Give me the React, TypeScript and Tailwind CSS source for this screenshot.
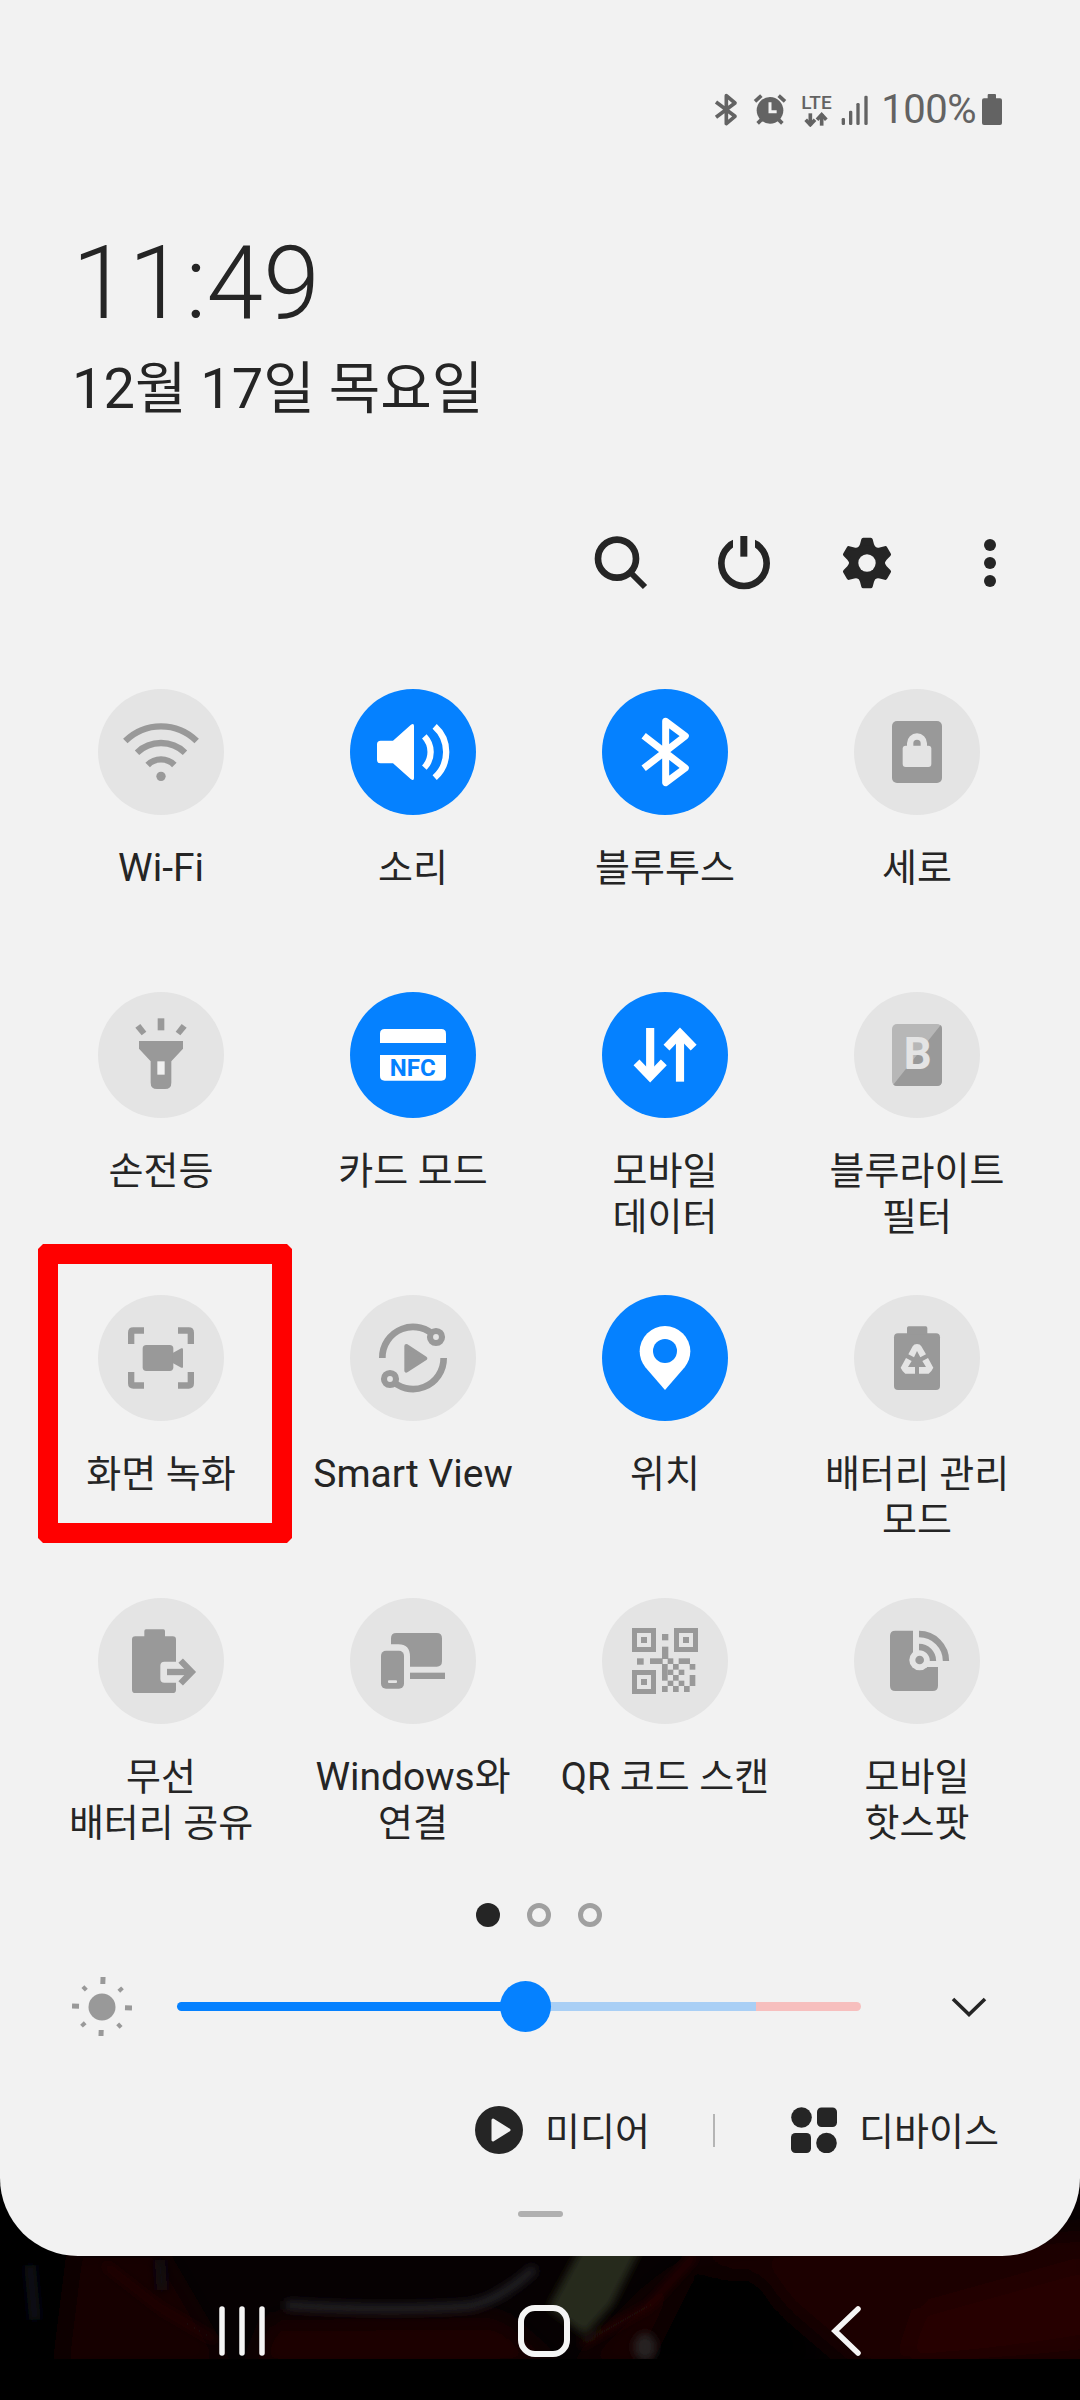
import React from 'react';

const OFF = '#999999';
const OFF_BG = '#e4e4e4';
const PANEL = '#f2f2f2';
const BLUE = '#0581ff';
const INK = '#252525';

interface TileData {
  id: string;
  lines: string[];
  active?: boolean;
  highlighted?: boolean;
  /** Latin labels are set one step larger than the Korean ones */
  latin?: boolean;
  icon: React.ReactNode;
}

/* Tile glyphs, all drawn on a 378 x 378 grid */

const WifiGlyph = (
  <g stroke={OFF} strokeWidth={19} fill="none">
    <path d="M82 156 A152 152 0 0 1 296 156" />
    <path d="M117 191 A104 104 0 0 1 261 191" />
    <path d="M149 228 A56 56 0 0 1 229 228" />
    <circle cx={189} cy={262} r={14} fill={OFF} stroke="none" />
  </g>
);

const SoundGlyph = (
  <g stroke="#fff" strokeWidth={19} fill="none">
    <path
      d="M92 155 H129 L182 108 Q192 101 192 111 V267 Q192 277 182 270 L129 223 H92 Q81 223 81 212 V166 Q81 155 92 155Z"
      fill="#fff"
      stroke="none"
    />
    <path d="M223 142 A68 68 0 0 1 223 236" />
    <path d="M254 112 A103 103 0 0 1 254 266" />
  </g>
);

const BluetoothGlyph = (
  <path
    d="M125 140 L250 237 L191 281 V97 L250 141 L125 238"
    stroke="#fff"
    strokeWidth={21}
    strokeLinejoin="round"
    fill="none"
  />
);

const PortraitLockGlyph = (
  <g>
    <rect x={114} y={96} width={150} height={186} rx={15} fill={OFF} />
    <rect x={146} y={170} width={86} height={64} rx={9} fill={OFF_BG} />
    <path d="M168.500 174 V163 a20.500 20.500 0 0 1 41 0 V174" stroke={OFF_BG} strokeWidth={19} fill="none" />
  </g>
);

const FlashlightGlyph = (
  <g fill={OFF}>
    <rect x={179} y={79} width={20} height={36} />
    <path d="M112 107 L127 96 L145 119 L131 130Z" />
    <path d="M266 107 L251 96 L233 119 L247 130Z" />
    <path d="M123 147 H255 V170 L220 208 V272 Q220 291 201 291 H177 Q158 291 158 272 V208 L123 170Z" />
    <rect x={178} y={208} width={22} height={40} fill="#f0f0f0" />
  </g>
);

const CardGlyph = (
  <g fill="#fff">
    <path d="M90 153 V125 Q90 111 104 111 H274 Q288 111 288 125 V153Z" />
    <path d="M90 189 H288 V252 Q288 266 274 266 H104 Q90 266 90 252Z" />
    <text
      x={188}
      y={252}
      fontSize={73}
      fontWeight={700}
      fontFamily="Roboto, sans-serif"
      textAnchor="middle"
      textLength={138}
      lengthAdjust="spacingAndGlyphs"
      fill={BLUE}
    >
      NFC
    </text>
  </g>
);

const MobileDataGlyph = (
  <g stroke="#fff" strokeWidth={24.500} fill="none">
    <path d="M144.500 108 V255" />
    <path d="M103.500 211 L144.500 254 L185.500 211" />
    <path d="M234 269 V124" />
    <path d="M193.500 167 L234 124 L275 167" />
  </g>
);

const BlueLightGlyph = (
  <g>
    <rect x={114} y={96} width={150} height={186} rx={15} fill="#b7b7b7" />
    <path d="M260 99 Q264 103 264 111 V267 Q264 282 249 282 H129 Q122 282 118 278Z" fill={OFF} />
    <text
      x={191}
      y={231}
      fontSize={131}
      fontWeight={700}
      fontFamily="Roboto, sans-serif"
      textAnchor="middle"
      fill={OFF_BG}
    >
      B
    </text>
  </g>
);

const RecordGlyph = (
  <g fill={OFF}>
    <g stroke={OFF} strokeWidth={19} fill="none">
      <path d="M138 106.500 H106 Q99.500 106.500 99.500 113 V147" />
      <path d="M240 106.500 H272 Q278.500 106.500 278.500 113 V147" />
      <path d="M138 271.500 H106 Q99.500 271.500 99.500 265 V231" />
      <path d="M240 271.500 H272 Q278.500 271.500 278.500 265 V231" />
    </g>
    <rect x={134} y={150} width={92} height={78} rx={11} />
    <path d="M224 174 L250 160 Q255 158 255 163 V215 Q255 220 250 218 L224 204Z" />
  </g>
);

const SmartViewGlyph = (
  <g stroke={OFF} strokeWidth={20} fill="none">
    <path d="M97 189 A92 92 0 0 1 258 127" />
    <path d="M281 189 A92 92 0 0 1 120 251" />
    <circle cx={258} cy={126} r={18} fill={OFF_BG} strokeWidth={18.500} />
    <circle cx={120} cy={252} r={18} fill={OFF_BG} strokeWidth={18.500} />
    <path d="M169 153 L226 190 L169 227Z" fill={OFF} strokeWidth={12} strokeLinejoin="round" />
  </g>
);

const LocationGlyph = (
  <g>
    <path d="M189 285 L130 217 C119 203 113 187 113 169 A76 76 0 0 1 265 169 C265 187 259 203 248 217Z" fill="#fff" />
    <circle cx={189} cy={168} r={36} fill={BLUE} />
  </g>
);

const PowerModeGlyph = (
  <g>
    <rect x={120} y={115} width={138} height={170} rx={12} fill={OFF} />
    <path d="M159 118 V99 Q159 94 164 94 H215 Q220 94 220 99 V118Z" fill={OFF} />
    <g fill={OFF_BG}>
      <path d="M163 178 L176 154 Q180 147 189 147 Q198 147 202 154 L216 178 L199 187 L189 168 L180 187Z" />
      <path d="M156 189 L173 198 L162 216 H183 V236 H154 Q146 231 140 218Z" />
      <path d="M222 189 L205 198 L216 216 H195 V236 H224 Q232 231 238 218Z" />
    </g>
  </g>
);

const PowerShareGlyph = (
  <g>
    <path
      d="M139 115 V99 Q139 94 144 94 H196 Q201 94 201 99 V115 H224 Q234 115 234 125 V191 H199 Q187 191 187 203 V242 Q187 254 199 254 H234 V275 Q234 285 224 285 H112 Q102 285 102 275 V125 Q102 115 112 115Z"
      fill={OFF}
    />
    <path d="M207 222 H282" stroke={OFF} strokeWidth={19} />
    <path d="M248 188 L281 222 L248 256" stroke={OFF} strokeWidth={19} fill="none" />
  </g>
);

const WindowsLinkGlyph = (
  <g fill={OFF}>
    <path d="M139 105 H260 Q276 105 276 121 V190 Q276 206 260 206 H180 V176 Q180 139 145 139 H123 V121 Q123 105 139 105Z" />
    <rect x={180} y={224} width={105} height={19} />
    <rect x={93} y={158} width={69} height={114} rx={15} />
    <rect x={114} y={247} width={27} height={8} rx={3} fill={OFF_BG} />
  </g>
);

const QR_FINDERS = [
  [90, 90],
  [216, 90],
  [90, 216],
];

const QR_BLOCKS = [
  [180, 108, 19, 19],
  [105, 181, 20, 19],
  [180, 146, 19, 37],
  [144, 181, 38, 17],
  [180, 198, 17, 50],
  [197, 181, 17, 17],
  [230, 181, 34, 17],
  [213, 198, 17, 17],
  [263, 198, 17, 17],
  [197, 215, 17, 16],
  [230, 215, 17, 16],
  [213, 231, 17, 17],
  [263, 231, 17, 33],
  [197, 248, 17, 16],
  [230, 248, 17, 16],
  [180, 264, 17, 18],
  [213, 264, 17, 18],
  [246, 264, 17, 18],
];

const QrGlyph = (
  <g fill={OFF}>
    {QR_FINDERS.map(([x, y]) => (
      <g key={`${x}-${y}`}>
        <rect x={x + 7.5} y={y + 7.5} width={57} height={57} fill="none" stroke={OFF} strokeWidth={15} />
        <rect x={x + 27} y={y + 27} width={18} height={18} />
      </g>
    ))}
    {QR_BLOCKS.map(([x, y, w, h]) => (
      <rect key={`${x}-${y}`} x={x} y={y} width={w} height={h} />
    ))}
  </g>
);

const HotspotGlyph = (
  <g>
    <path d="M124 98 H177 V207 H252 V263 Q252 279 236 279 H124 Q108 279 108 263 V114 Q108 98 124 98Z" fill={OFF} />
    <circle cx={197} cy={186} r={31} fill={OFF_BG} />
    <circle cx={197} cy={186} r={13} fill={OFF} />
    <g stroke={OFF} strokeWidth={19} fill="none">
      <path d="M195 147 A42 42 0 0 1 237 189" />
      <path d="M195 108 A81 81 0 0 1 276 189" />
    </g>
  </g>
);

const tiles: TileData[] = [
  { id: 'wifi', lines: ['Wi-Fi'], latin: true, icon: WifiGlyph },
  { id: 'sound', lines: ['소리'], active: true, icon: SoundGlyph },
  { id: 'bluetooth', lines: ['블루투스'], active: true, icon: BluetoothGlyph },
  { id: 'portrait', lines: ['세로'], icon: PortraitLockGlyph },
  { id: 'flashlight', lines: ['손전등'], icon: FlashlightGlyph },
  { id: 'card', lines: ['카드 모드'], active: true, icon: CardGlyph },
  { id: 'data', lines: ['모바일', '데이터'], active: true, icon: MobileDataGlyph },
  { id: 'bluelight', lines: ['블루라이트', '필터'], icon: BlueLightGlyph },
  { id: 'record', lines: ['화면 녹화'], highlighted: true, icon: RecordGlyph },
  { id: 'smartview', lines: ['Smart View'], latin: true, icon: SmartViewGlyph },
  { id: 'location', lines: ['위치'], active: true, icon: LocationGlyph },
  { id: 'powermode', lines: ['배터리 관리', '모드'], icon: PowerModeGlyph },
  { id: 'powershare', lines: ['무선', '배터리 공유'], icon: PowerShareGlyph },
  { id: 'windows', lines: ['Windows와', '연결'], latin: true, icon: WindowsLinkGlyph },
  { id: 'qr', lines: ['QR 코드 스캔'], icon: QrGlyph },
  { id: 'hotspot', lines: ['모바일', '핫스팟'], icon: HotspotGlyph },
];

function Tile({ tile }: { tile: TileData }) {
  return (
    <div className="relative flex h-[303px] flex-col items-center">
      <div
        className={`h-[126px] w-[126px] rounded-full ${tile.active ? 'bg-[#0581ff]' : 'bg-[#e4e4e4]'}`}
      >
        <svg viewBox="0 0 378 378" className="h-full w-full">
          {tile.icon}
        </svg>
      </div>
      <div className="mt-[30px] text-center text-[38px] leading-[46px] whitespace-nowrap">
        {tile.lines.map((line, i) => (
          <div key={line} className={tile.latin && i === 0 ? 'text-[39px]' : ''}>
            {line}
          </div>
        ))}
      </div>
      {tile.highlighted && (
        <div className="absolute -top-[51px] left-[3px] h-[299px] w-[254px] border-[20px] border-[#ff0000] [clip-path:polygon(5px_0,249px_0,254px_5px,254px_294px,249px_299px,5px_299px,0_294px,0_5px)]" />
      )}
    </div>
  );
}

function StatusBar() {
  const c = '#636363';
  return (
    <div className="flex h-[34px] items-center justify-end pr-[78px] text-[#636363]">
      <svg viewBox="0 0 72 102" className="h-[34px] w-[24px]">
        <path d="M6 27 L63 70 L37 92 V8 L63 30 L6 73" stroke={c} strokeWidth={11} strokeLinejoin="round" fill="none" />
      </svg>
      <svg viewBox="0 0 102 102" className="ml-[15px] h-[34px] w-[34px]">
        <circle cx={51} cy={52} r={40} fill={c} />
        <g stroke={c} strokeWidth={11}>
          <path d="M6 25 L25 8" />
          <path d="M77 8 L96 25" />
          <path d="M14 91 L26 79" />
          <path d="M76 79 L88 91" />
        </g>
        <path d="M51 28 V56 H71" stroke={PANEL} strokeWidth={9} fill="none" />
      </svg>
      <svg viewBox="0 0 93 102" className="ml-[14px] h-[34px] w-[31px]">
        <text
          x={1}
          y={47}
          fontSize={56}
          fontWeight={500}
          fontFamily="Roboto, sans-serif"
          textLength={91}
          lengthAdjust="spacingAndGlyphs"
          fill={c}
        >
          LTE
        </text>
        <g stroke={c} strokeWidth={11} fill="none">
          <path d="M28 61 V97" />
          <path d="M14 80 L28 95 L42 80" />
          <path d="M62 98 V63" />
          <path d="M48 80 L62 65 L76 80" />
        </g>
      </svg>
      <svg viewBox="0 0 84 102" className="ml-[9px] h-[34px] w-[28px]" fill={c}>
        <rect x={2} y={75} width={10} height={21} rx={4} />
        <rect x={24} y={53} width={10} height={43} rx={4} />
        <rect x={46} y={30} width={10} height={66} rx={4} />
        <rect x={70} y={8} width={10} height={88} rx={4} />
      </svg>
      <span className="ml-[11px] w-[96px] text-right text-[40px] leading-[34px] tracking-[-0.5px]">100%</span>
      <svg viewBox="0 0 60 102" className="ml-[6px] h-[34px] w-[20px]" fill={c}>
        <rect x={17} y={3} width={25} height={20} rx={3} />
        <rect x={0} y={16} width={60} height={80} rx={6} />
      </svg>
    </div>
  );
}

function Toolbar() {
  return (
    <div className="flex h-[54px] items-center justify-end gap-[69px] pr-[63px]">
      <svg viewBox="0 0 162 162" className="h-[54px] w-[54px]" stroke={INK} strokeWidth={20} fill="none">
        <circle cx={69} cy={68} r={57} />
        <path d="M108 108 L153 153" strokeWidth={18} />
      </svg>
      <svg viewBox="0 0 162 162" className="h-[54px] w-[54px]">
        <circle cx={81} cy={82} r={68} stroke={INK} strokeWidth={20} fill="none" />
        <rect x={48} y={0} width={66} height={50} fill={PANEL} />
        <rect x={70} y={0} width={21} height={62} fill={INK} />
      </svg>
      <svg viewBox="-81 -81 162 162" className="h-[54px] w-[54px]">
        {[0, 60, 120, 180, 240, 300].map((deg) => (
          <path
            key={deg}
            transform={`rotate(${deg})`}
            d="M-30 -44 Q-23 -49 -21 -56 L-17 -71 Q-16 -76 -11 -76 H11 Q16 -76 17 -71 L21 -56 Q23 -49 30 -44 L0 0Z"
            fill={INK}
          />
        ))}
        <circle r={53} fill={INK} />
        <circle r={26} fill={PANEL} />
      </svg>
      <svg viewBox="0 0 162 162" className="h-[54px] w-[54px]" fill={INK}>
        <circle cx={81} cy={27} r={18} />
        <circle cx={81} cy={81} r={18} />
        <circle cx={81} cy={135} r={18} />
      </svg>
    </div>
  );
}

function BrightnessRow() {
  return (
    <div className="flex h-[60px] items-center pl-[72px]">
      <svg viewBox="-30 -30 60 60" className="h-[60px] w-[60px]" fill={OFF}>
        <circle cy={1} r={13.5} />
        <g transform="translate(0 1) rotate(2)">
          {[0, 90, 180, 270].map((deg) => (
            <rect key={deg} x={-2.5} y={-30} width={5} height={7} transform={`rotate(${deg})`} />
          ))}
          {[45, 135, 225, 315].map((deg) => (
            <rect key={deg} x={-2} y={-28} width={4} height={5} transform={`rotate(${deg})`} />
          ))}
        </g>
      </svg>
      <div className="relative ml-[45px] flex h-[9px] w-[684px] overflow-visible">
        <div className="w-[349px] rounded-l-full bg-[#0581ff]" />
        <div className="w-[230px] bg-[#a9cff5]" />
        <div className="flex-1 rounded-r-full bg-[#f7bfbe]" />
        <div className="absolute -top-[21px] left-[323px] h-[51px] w-[51px] rounded-full bg-[#0581ff]" />
      </div>
      <svg viewBox="0 0 36 22" className="mt-[2px] ml-[90px] h-[22px] w-[36px]">
        <path d="M2 3 L18 18.500 L34 3" stroke={INK} strokeWidth={3.6} fill="none" />
      </svg>
    </div>
  );
}

function FooterLinks() {
  return (
    <div className="flex h-[52px] items-center pl-[475px] text-[38px] leading-[52px] whitespace-nowrap">
      <svg viewBox="0 0 48 48" className="h-[48px] w-[48px]">
        <circle cx={24} cy={24} r={24} fill={INK} />
        <path d="M18 14 L34 24 L18 34Z" fill={PANEL} stroke={PANEL} strokeWidth={3} strokeLinejoin="round" />
      </svg>
      <span className="mt-[3px] ml-[22px] w-[104px]">미디어</span>
      <div className="ml-[64px] h-[33px] w-[2px] bg-[#b5b5b5]" />
      <svg viewBox="0 0 46 46" className="ml-[76px] h-[46px] w-[46px]" fill={INK}>
        <circle cx={10.5} cy={10.5} r={10.3} />
        <rect x={26} y={0.5} width={20} height={19.500} rx={4.5} />
        <rect x={0} y={26} width={20} height={20} rx={4.5} />
        <circle cx={35.5} cy={36} r={10.3} />
      </svg>
      <span className="mt-[3px] ml-[22px]">디바이스</span>
    </div>
  );
}

/** Dimmed, out-of-focus wallpaper strip behind the navigation keys */
function Wallpaper() {
  return (
    <svg viewBox="0 0 1080 219" className="absolute top-[2140px] left-0 h-[219px] w-[1080px] bg-[#060102]">
      <defs>
        <filter id="soft" x="-20%" y="-20%" width="140%" height="140%">
          <feGaussianBlur stdDeviation="12" />
        </filter>
        <filter id="fine" x="-20%" y="-20%" width="140%" height="140%">
          <feGaussianBlur stdDeviation="4" />
        </filter>
      </defs>
      <g filter="url(#soft)">
        <rect x={-20} y={0} width={90} height={240} fill="#020306" />
        <path d="M75 110 L160 110 L230 230 L60 230Z" fill="#150303" />
        <path d="M270 180 L500 178 L560 230 L250 230Z" fill="#1b0405" />
        <path d="M570 230 L650 150 L700 110 L730 230Z" fill="#120303" />
        <path d="M690 110 L1100 90 L1100 230 L860 230 L790 170Z" fill="#1f0302" />
        <path d="M690 130 L760 130 L830 230 L640 230Z" fill="#060101" />
        <path d="M920 170 L1100 120 L1100 200 L900 230Z" fill="#280502" />
      </g>
      <g filter="url(#fine)">
        <path d="M585 100 H645 L612 165 L585 195 L548 168Z" fill="#25291a" />
        <path d="M285 165 Q390 172 470 166 Q500 160 535 128" stroke="#242026" strokeWidth={9} fill="none" />
        <path d="M105 125 L160 168 L215 200" stroke="#260808" strokeWidth={5} fill="none" />
        <path d="M695 115 L650 165 L580 205" stroke="#2d0c09" strokeWidth={5} fill="none" />
        <path d="M30 125 L35 180" stroke="#070d14" strokeWidth={12} />
        <ellipse cx={645} cy={207} rx={11} ry={14} fill="#252022" />
        <path d="M160 120 L162 150" stroke="#101014" strokeWidth={10} />
      </g>
    </svg>
  );
}

function NavigationBar() {
  return (
    <div className="relative mt-[47px] flex h-[56px] items-center pl-[217px]">
      <svg viewBox="0 0 50 56" className="h-[56px] w-[50px]" stroke="#f5f5f5" strokeWidth={5.500} strokeLinecap="round">
        <path d="M5 6 V50" />
        <path d="M25 6 V50" />
        <path d="M45 6 V50" />
      </svg>
      <svg
        viewBox="0 0 56 56"
        className="ml-[249px] h-[56px] w-[56px]"
        stroke="#f5f5f5"
        strokeWidth={6}
        fill="none"
      >
        <rect x={5} y={5} width={46} height={46} rx={14} />
      </svg>
      <svg
        viewBox="0 0 34 56"
        className="ml-[257px] h-[56px] w-[34px]"
        stroke="#f5f5f5"
        strokeWidth={5.500}
        fill="none"
      >
        <path d="M29 6 L6 28 L29 50" strokeLinecap="round" />
      </svg>
    </div>
  );
}

export default function App() {
  return (
    <div className="relative h-[2400px] w-[1080px] overflow-hidden bg-black font-[Roboto,'Noto_Sans_CJK_KR',sans-serif] text-[#252525]">
      <Wallpaper />
      <div className="relative h-[2256px] rounded-b-[78px] bg-[#f2f2f2] pt-[93px]">
        <StatusBar />

        {/* Clock and date */}
        <div className="mt-[96px] pl-[72px]">
          <div className="text-[102px] leading-[120px] font-light">11:49</div>
          <div className="mt-[10px] text-[56px] leading-[72px]">12월 17일 목요일</div>
        </div>

        <div className="mt-[111px]">
          <Toolbar />
        </div>

        {/* Quick settings */}
        <div className="mt-[99px] grid grid-cols-4 pr-[37px] pl-[35px]">
          {tiles.map((tile) => (
            <Tile key={tile.id} tile={tile} />
          ))}
        </div>

        {/* Page indicator */}
        <div className="mt-[2px] flex justify-center gap-[27px] pr-[2px]">
          <span className="h-[24px] w-[24px] rounded-full bg-[#252525]" />
          <span className="h-[24px] w-[24px] rounded-full border-[5px] border-[#a0a0a0]" />
          <span className="h-[24px] w-[24px] rounded-full border-[5px] border-[#a0a0a0]" />
        </div>

        <div className="mt-[49px]">
          <BrightnessRow />
        </div>
        <div className="mt-[68px]">
          <FooterLinks />
        </div>
        <div className="mx-auto mt-[55px] h-[6px] w-[45px] rounded-full bg-[#b0b0b0]" />
      </div>
      <NavigationBar />
    </div>
  );
}
